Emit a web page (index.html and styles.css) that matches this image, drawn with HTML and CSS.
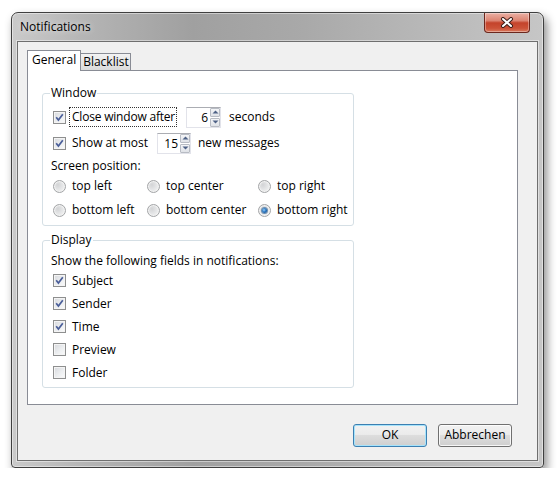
FILE: index.html
```html
<!DOCTYPE html>
<html>
<head>
<meta charset="utf-8">
<link rel="stylesheet" href="styles.css">
</head>
<body>
<div class="window">
  <div class="titlebar">
    <span class="title">Notifications</span>
    <div class="close">
      <svg width="14" height="11" viewBox="0 0 14 11"><path d="M3 2 L11 9 M11 2 L3 9" stroke="#3b1d18" stroke-width="4" stroke-linecap="round" fill="none"/><path d="M3 2 L11 9 M11 2 L3 9" stroke="#fff" stroke-width="2" stroke-linecap="round" fill="none"/></svg>
    </div>
  </div>
  <div class="client">
    <div class="tabs">
      <div class="tab active">General</div>
      <div class="tab">Blacklist</div>
    </div>
    <div class="panel">
      <fieldset class="group group-window">
        <legend>Window</legend>
        <div class="row h26">
          <span class="cb checked"><svg width="11" height="11" viewBox="0 0 11 11"><path d="M2.2 5.2 L4.4 8 L8.8 2.2" stroke="#4a5e99" stroke-width="1.7" fill="none"/></svg></span>
          <span class="lbl focus">Close window after</span>
          <span class="spin s1"><span class="val">6</span><span class="arrows"><span class="ar up"><svg width="7" height="4" viewBox="0 0 7 4"><path d="M0.5 3.5 L3.5 0.5 L6.5 3.5Z" fill="#4d6185"/></svg></span><span class="ar down"><svg width="7" height="4" viewBox="0 0 7 4"><path d="M0.5 0.5 L3.5 3.5 L6.5 0.5Z" fill="#4d6185"/></svg></span></span></span>
          <span class="unit u1">seconds</span>
        </div>
        <div class="row h26">
          <span class="cb checked"><svg width="11" height="11" viewBox="0 0 11 11"><path d="M2.2 5.2 L4.4 8 L8.8 2.2" stroke="#4a5e99" stroke-width="1.7" fill="none"/></svg></span>
          <span class="lbl l2">Show at most</span>
          <span class="spin s2"><span class="val">15</span><span class="arrows"><span class="ar up"><svg width="7" height="4" viewBox="0 0 7 4"><path d="M0.5 3.5 L3.5 0.5 L6.5 3.5Z" fill="#4d6185"/></svg></span><span class="ar down"><svg width="7" height="4" viewBox="0 0 7 4"><path d="M0.5 0.5 L3.5 3.5 L6.5 0.5Z" fill="#4d6185"/></svg></span></span></span>
          <span class="unit u2">new messages</span>
        </div>
        <div class="row h18 text-row">Screen position:</div>
        <div class="radios">
          <div class="ropt"><span class="radio"></span><span class="rl">top left</span></div>
          <div class="ropt"><span class="radio"></span><span class="rl">top center</span></div>
          <div class="ropt"><span class="radio"></span><span class="rl">top right</span></div>
          <div class="ropt"><span class="radio"></span><span class="rl">bottom left</span></div>
          <div class="ropt"><span class="radio"></span><span class="rl">bottom center</span></div>
          <div class="ropt"><span class="radio on"></span><span class="rl">bottom right</span></div>
        </div>
      </fieldset>
      <fieldset class="group group-display">
        <legend>Display</legend>
        <div class="row h18 text-row">Show the following fields in notifications:</div>
        <div class="row h23">
          <span class="cb checked"><svg width="11" height="11" viewBox="0 0 11 11"><path d="M2.2 5.2 L4.4 8 L8.8 2.2" stroke="#4a5e99" stroke-width="1.7" fill="none"/></svg></span>
          <span class="lbl">Subject</span>
        </div>
        <div class="row h23">
          <span class="cb checked"><svg width="11" height="11" viewBox="0 0 11 11"><path d="M2.2 5.2 L4.4 8 L8.8 2.2" stroke="#4a5e99" stroke-width="1.7" fill="none"/></svg></span>
          <span class="lbl">Sender</span>
        </div>
        <div class="row h23">
          <span class="cb checked"><svg width="11" height="11" viewBox="0 0 11 11"><path d="M2.2 5.2 L4.4 8 L8.8 2.2" stroke="#4a5e99" stroke-width="1.7" fill="none"/></svg></span>
          <span class="lbl">Time</span>
        </div>
        <div class="row h23">
          <span class="cb"></span>
          <span class="lbl">Preview</span>
        </div>
        <div class="row h23">
          <span class="cb"></span>
          <span class="lbl">Folder</span>
        </div>
      </fieldset>
    </div>
    <div class="buttons">
      <div class="btn default">OK</div>
      <div class="btn">Abbrechen</div>
    </div>
  </div>
</div>
</body>
</html>
```

FILE: styles.css
```css
* { box-sizing: border-box; }
html, body { margin: 0; background: #fff; }
body {
  padding: 12px 0 0 11px;
  font-family: "Open Sans", "Noto Sans", sans-serif;
  font-size: 12px;
  color: #000;
  white-space: nowrap;
}
.window {
  width: 533px;
  height: 456px;
  border: 1px solid #3f3f3f;
  border-radius: 7px 7px 4px 4px;
  background: linear-gradient(90deg, #cacaca 0%, #b4b4b4 14%, #a0a0a0 34%, #a9a9a9 55%, #b6b6b6 75%, #c6c6c6 100%);
  box-shadow: 3px 5px 10px rgba(0,0,0,.45), inset 0 0 0 1px rgba(255,255,255,.45);
  display: flex;
  flex-direction: column;
}
.titlebar {
  height: 28px;
  display: flex;
  align-items: flex-start;
}
.title {
  padding: 6px 0 0 8px;
  line-height: 16px;
  text-shadow: 0 0 6px rgba(255,255,255,.8);
}
.close {
  margin-left: auto;
  margin-right: 13px;
  width: 46px;
  height: 20px;
  border: 1px solid #6b271d;
  border-top: none;
  border-radius: 0 0 4px 4px;
  background: linear-gradient(#eab0a4 0%, #dc8472 40%, #c4432b 52%, #cc5238 80%, #d97a5e 100%);
  box-shadow: inset 0 0 0 1px rgba(255,255,255,.35);
  display: flex;
  align-items: center;
  justify-content: center;
}
.client {
  flex: 1;
  margin: 0 5px 6px;
  border: 1px solid #6f6f6f;
  background: #f0f0f0;
  padding: 8px 0 0 9px;
  box-shadow: 0 0 0 1px rgba(255,255,255,.45);
}
.tabs {
  display: flex;
  align-items: flex-end;
  height: 21px;
  margin-bottom: -1px;
  position: relative;
  z-index: 1;
}
.tab {
  height: 18px;
  border: 1px solid #898c95;
  background: linear-gradient(#f3f3f3, #e6e6e6 50%, #dadada);
  padding: 0 1px 0 2px;
  line-height: 16px;
  margin-left: -1px;
}
.tab.active {
  height: 21px;
  background: #fff;
  border-bottom: none;
  margin-left: 0;
  padding: 0 4px;
  line-height: 18px;
}
.panel {
  width: 491px;
  height: 335px;
  border: 1px solid #898c95;
  background: #fff;
  padding: 14px 0 0 14px;
}
.group {
  width: 312px;
  margin: 0;
  border: 1px solid #d5dfe5;
  border-radius: 3px;
  padding: 3px 0 3px 0;
}
.group legend {
  padding: 0 1px;
  margin-left: 7px;
  line-height: 16px;
}
.group-display { margin-top: 6px; }
.row {
  display: flex;
  align-items: center;
  padding-left: 10px;
}
.h26 { height: 26px; }
.h23 { height: 23px; }
.h18 { height: 18px; }
.text-row { padding-left: 8px; }
.cb {
  width: 13px;
  height: 13px;
  flex: none;
  border: 1px solid #8e8f8f;
  background: linear-gradient(135deg, #d6d8dc 0%, #eceef0 55%, #fbfbfb 100%);
  box-shadow: inset 0 0 0 1px #f4f4f4;
  display: flex;
  align-items: center;
  justify-content: center;
}
.cb svg { display: block; }
.lbl { margin-left: 6px; line-height: 16px; }
.lbl.focus {
  margin-left: 3px;
  min-width: 107px;
  height: 20px;
  border: 1px dotted #333;
  padding: 1px 1px 0 2px;
  letter-spacing: -0.2px;
}
.lbl.l2 { width: 85px; }
.spin {
  height: 21px;
  border: 1px solid #e2e3ea;
  border-top-color: #abadb3;
  background: #fff;
  display: flex;
  align-items: stretch;
}
.s1 { width: 35px; margin-left: 9px; }
.s2 { width: 34px; }
.val {
  flex: 1;
  text-align: right;
  padding-right: 2px;
  line-height: 19px;
}
.arrows {
  width: 10px;
  display: flex;
  flex-direction: column;
  gap: 1px;
}
.ar {
  flex: 1;
  border: 1px solid #b8bcc4;
  border-radius: 1px;
  background: linear-gradient(#f4f5f7, #dfe2e7);
  display: flex;
  align-items: center;
  justify-content: center;
}
.ar svg { display: block; }
.unit { line-height: 16px; }
.u1 { margin-left: 8px; }
.u2 { margin-left: 7px; }
.radios {
  display: grid;
  grid-template-columns: 94px 111px auto;
  grid-auto-rows: 24px;
  padding-left: 10px;
}
.ropt { display: flex; align-items: center; }
.radio {
  width: 13px;
  height: 13px;
  flex: none;
  border-radius: 50%;
  border: 1px solid #a3a5a7;
  background: radial-gradient(circle at 35% 35%, #d3d4d6 0%, #e6e7e8 50%, #f7f7f7 100%);
  box-shadow: inset 0 0 0 1px #f2f2f2;
  display: flex;
  align-items: center;
  justify-content: center;
}
.radio.on::after {
  content: "";
  width: 5px;
  height: 5px;
  border-radius: 50%;
  background: radial-gradient(circle at 40% 40%, #9fd0f6 0%, #2a78c4 45%, #0e3f7a 100%);
  box-shadow: 0 0 0 1px #6e8fb0;
}
.rl { margin-left: 6px; line-height: 16px; }
.buttons {
  width: 485px;
  display: flex;
  justify-content: flex-end;
  gap: 11px;
  margin-top: 19px;
}
.btn {
  width: 74px;
  height: 23px;
  border: 1px solid #707070;
  border-radius: 3px;
  background: linear-gradient(#f2f2f2 0%, #ebebeb 45%, #dddddd 50%, #cfcfcf 100%);
  box-shadow: inset 0 0 0 1px rgba(255,255,255,.8);
  text-align: center;
  line-height: 20px;
}
.btn.default {
  border-color: #3c7fb1;
  box-shadow: inset 0 0 0 1px #a6e3fb;
}
```
